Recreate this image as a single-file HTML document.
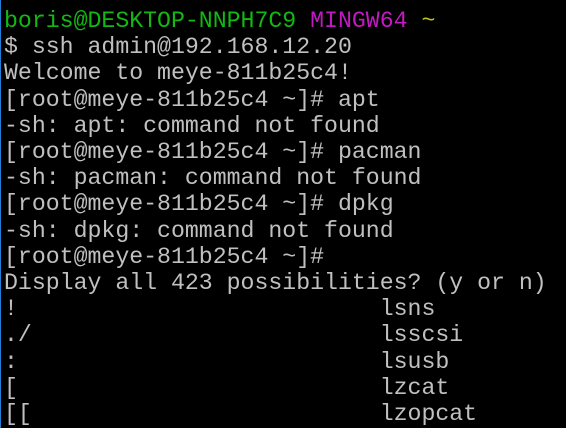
<!DOCTYPE html>
<html><head><style>
html,body{margin:0;padding:0;background:#000;width:566px;height:428px;overflow:hidden}
body{border-left:1px solid #1e7fd6;box-sizing:border-box;position:relative}
pre{margin:0;position:absolute;left:3px;top:8px;font-family:"Liberation Mono",monospace;font-size:23.2px;line-height:26.2px;color:#c0c0c0;white-space:pre;height:420px;overflow:hidden}
.g{color:#13b913}.m{color:#c21ac2}.y{color:#c1c11a}
</style></head><body><pre><span class="g">boris@DESKTOP-NNPH7C9</span> <span class="m">MINGW64</span> <span class="y">~</span>
$ ssh admin@192.168.12.20
Welcome to meye-811b25c4!
[root@meye-811b25c4 ~]# apt
-sh: apt: command not found
[root@meye-811b25c4 ~]# pacman
-sh: pacman: command not found
[root@meye-811b25c4 ~]# dpkg
-sh: dpkg: command not found
[root@meye-811b25c4 ~]#
Display all 423 possibilities? (y or n)
!                          lsns
./                         lsscsi
:                          lsusb
[                          lzcat
[[                         lzopcat
[[[                        mail</pre></body></html>
